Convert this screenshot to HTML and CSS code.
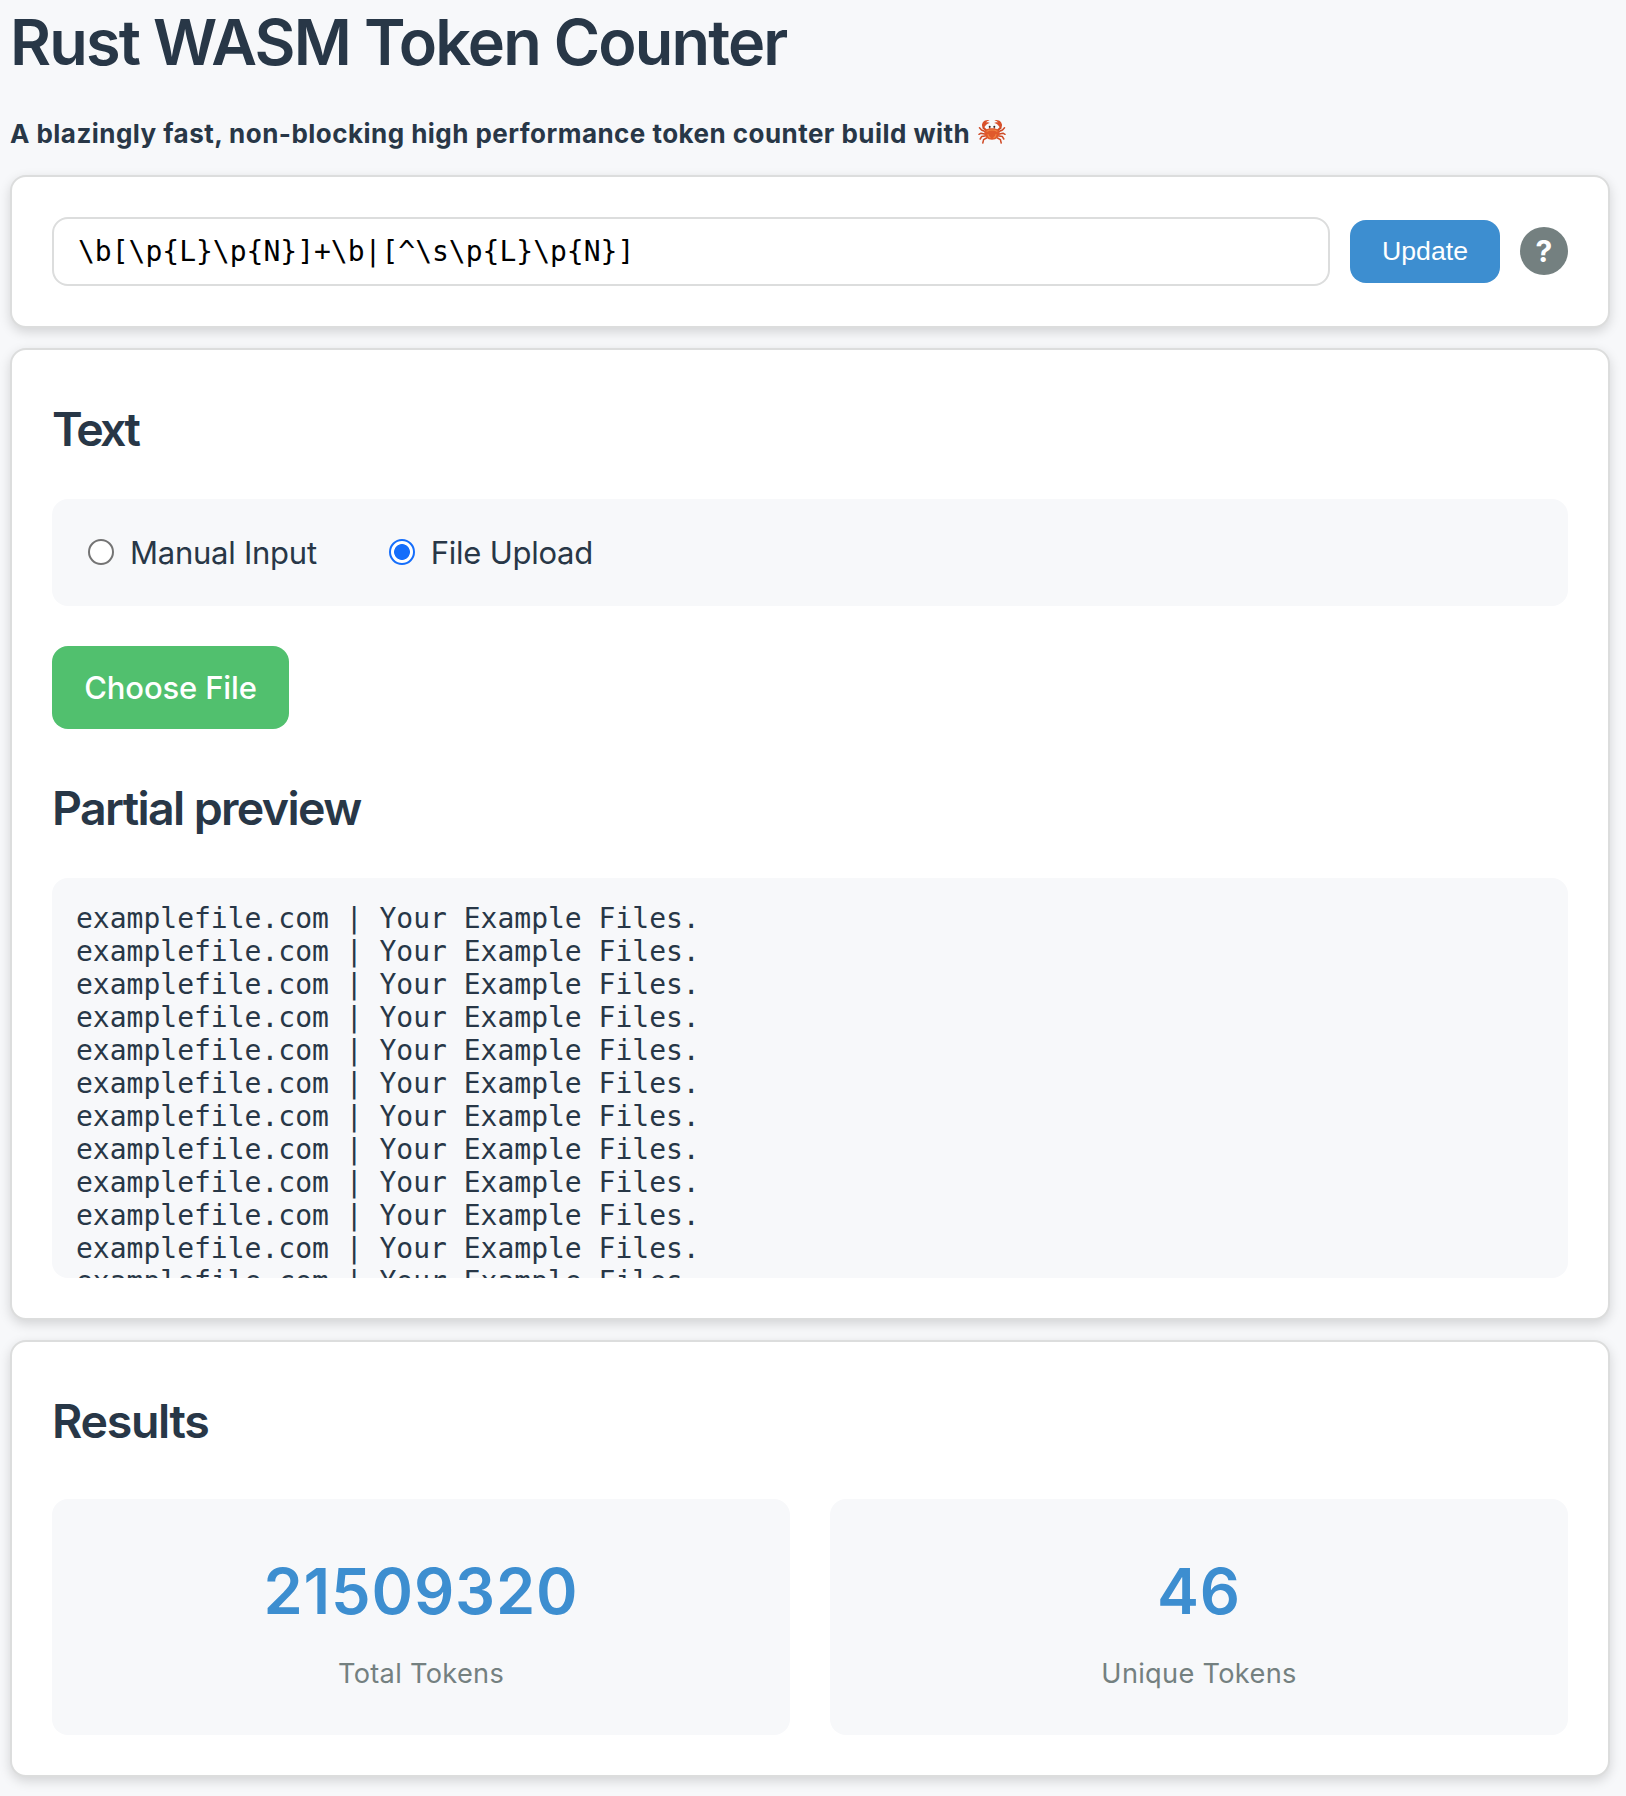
FILE: index.html
```
<!DOCTYPE html>
<html lang="en">
<head>
<meta charset="utf-8">
<title>Rust WASM Token Counter</title>
<link rel="stylesheet" href="styles.css">
</head>
<body>
<header class="header">
  <h1 class="title">Rust WASM Token Counter</h1>
  <p class="subtitle"><span>A blazingly fast, non-blocking high performance token counter build with</span>
    <svg class="crab" viewBox="0 0 28 28" aria-label="crab" role="img">
      <g fill="none" stroke="#cf4a25" stroke-linecap="round" stroke-linejoin="round">
        <path stroke-width="1.5" d="M7 13.5 3.5 12 1.5 9.8M6.5 16 3 15.2 1 16.3M7 18 3.6 18.6 2.2 21M8.5 20 5.6 21.6 4.8 25M21 13.5 24.5 12 26.5 9.8M21.5 16 25 15.2 27 16.3M21 18 24.4 18.6 25.8 21M19.5 20 22.4 21.6 23.2 25"/>
        <path stroke-width="2.2" d="M8.5 12.5 5.6 10 5.2 6.8M19.5 12.5 22.4 10 22.8 6.8"/>
      </g>
      <path fill="#d9502a" d="M4.4 8.2C3.2 4.6 6.6 1.2 11.6 2.2 9.6 2.7 8.4 3.6 8 4.6 9.4 4 10.8 4.2 11.8 5 9.4 5.2 8 6.8 6.6 8.8ZM23.6 8.2C24.8 4.6 21.4 1.2 16.4 2.2 18.4 2.7 19.6 3.6 20 4.6 18.6 4 17.2 4.2 16.2 5 18.6 5.2 20 6.8 21.4 8.8Z"/>
      <path stroke="#c9522c" stroke-width="1" d="M11.7 11V9M16.3 11V9"/>
      <circle cx="11.7" cy="8.8" r="1" fill="#3a2523"/><circle cx="16.3" cy="8.8" r="1" fill="#3a2523"/>
      <path fill="#e05a2c" d="M6.3 14.7C6.8 11.6 10 10.3 14 10.3S21.2 11.6 21.7 14.7C21.8 18.4 18.5 21.7 14 21.7S6.2 18.4 6.3 14.7Z"/>
      <path fill="none" stroke="#f08544" stroke-width="1.2" stroke-linecap="round" d="M9 13.2C11.5 11.6 16.5 11.6 19 13.2M10 16.5C10.2 18 11 19 12 19.6M18 16.5C17.8 18 17 19 16 19.6"/>
    </svg>
  </p>
</header>
<main class="cards">
  <section class="card pattern">
    <input class="pattern-input" type="text" aria-label="Token pattern" value="\b[\p{L}\p{N}]+\b|[^\s\p{L}\p{N}]">
    <button class="update">Update</button>
    <button class="help">?</button>
  </section>
  <section class="card">
    <h2 class="heading heading-text">Text</h2>
    <div class="modes">
      <label class="mode"><input class="radio" type="radio" name="mode">Manual Input</label>
      <label class="mode"><input class="radio" type="radio" name="mode" checked>File Upload</label>
    </div>
    <button class="choose">Choose File</button>
    <h2 class="heading heading-preview">Partial preview</h2>
    <pre class="preview">examplefile.com | Your Example Files.
examplefile.com | Your Example Files.
examplefile.com | Your Example Files.
examplefile.com | Your Example Files.
examplefile.com | Your Example Files.
examplefile.com | Your Example Files.
examplefile.com | Your Example Files.
examplefile.com | Your Example Files.
examplefile.com | Your Example Files.
examplefile.com | Your Example Files.
examplefile.com | Your Example Files.
examplefile.com | Your Example Files.</pre>
  </section>
  <section class="card">
    <h2 class="heading heading-results">Results</h2>
    <div class="stats">
      <div class="stat"><div class="value">21509320</div><div class="label">Total Tokens</div></div>
      <div class="stat"><div class="value">46</div><div class="label">Unique Tokens</div></div>
    </div>
  </section>
</main>
</body>
</html>
```
FILE: styles.css
```
* { box-sizing: border-box; }
body {
  margin: 0;
  padding: 4px 16px 19px 10px;
  background: #f7f8fa;
  color: #283747;
  font-family: Inter, sans-serif;
}
h1, h2, p, pre { margin: 0; }
button { border: 0; padding: 0; color: #fff; }

.title {
  font-size: 63px;
  font-weight: 600;
  line-height: 76px;
  letter-spacing: -1.87px;
}
.subtitle {
  display: flex;
  gap: 8px;
  height: 32px;
  margin: 37px 0 26px;
  font-size: 26px;
  font-weight: 700;
  line-height: 33px;
  letter-spacing: 0.46px;
  white-space: nowrap;
}
.crab { width: 28px; height: 28px; margin-top: 1px; }

.cards { display: flex; flex-direction: column; gap: 20px; }
.card {
  padding: 40px;
  border: 2px solid #dcdddd;
  border-radius: 16px;
  background: #fff;
  box-shadow: 0 4px 12px rgba(0, 0, 0, 0.15);
}

.pattern { display: flex; align-items: center; gap: 20px; height: 153px; }
.pattern-input {
  flex: 1;
  min-width: 0;
  height: 69px;
  padding: 0 24px;
  border: 2px solid #dcdddd;
  border-radius: 16px;
  background: #fff;
  color: #000;
  font: 28px "DejaVu Sans Mono", monospace;
}
.update {
  width: 150px;
  height: 63px;
  border-radius: 16px;
  background: #3d8ed0;
  font: 26.67px "Liberation Sans", sans-serif;
}
.help {
  width: 48px;
  height: 48px;
  margin-bottom: 1px;
  border-radius: 50%;
  background: #748080;
  font: 700 30px/48px Inter, sans-serif;
}

.heading { font-size: 46.5px; font-weight: 600; line-height: 56px; }
.heading-text { margin: 11px 0 42px; letter-spacing: -2.8px; }
.heading-preview { margin: 51px 0 42px; letter-spacing: -1.64px; }
.heading-results { margin: 11px 0 50px; letter-spacing: -1.3px; }

.modes {
  display: flex;
  align-items: center;
  gap: 72px;
  height: 107px;
  padding: 0 36px;
  border-radius: 16px;
  background: #f7f8fa;
}
.mode {
  display: flex;
  align-items: center;
  gap: 16px;
  font-size: 31px;
  letter-spacing: -0.25px;
}
.radio {
  appearance: none;
  width: 26px;
  height: 26px;
  margin: 0 0 2px;
  border: 2px solid #747474;
  border-radius: 50%;
  background: #fff;
}
.radio:checked {
  border-color: #156efb;
  background: radial-gradient(circle, #156efb 7.5px, #fff 8.3px);
}
.choose {
  display: block;
  width: 237px;
  height: 83px;
  margin-top: 40px;
  border-radius: 16px;
  background: #51c06e;
  font: 500 31px Inter, sans-serif;
  letter-spacing: -0.14px;
}
.preview {
  height: 400px;
  padding: 24px;
  border-radius: 16px;
  background: #f7f8fa;
  font: 28px/33px "DejaVu Sans Mono", monospace;
  overflow: hidden;
}

.stats { display: grid; grid-template-columns: 1fr 1fr; gap: 40px; }
.stat {
  height: 236px;
  padding-top: 52px;
  border-radius: 16px;
  background: #f7f8fa;
  text-align: center;
}
.value {
  color: #3d8ed0;
  font-size: 63px;
  font-weight: 600;
  line-height: 80px;
  letter-spacing: 0.85px;
}
.label {
  margin-top: 26px;
  color: #748080;
  font-size: 27.2px;
  line-height: 34px;
  letter-spacing: 0.3px;
}
```
